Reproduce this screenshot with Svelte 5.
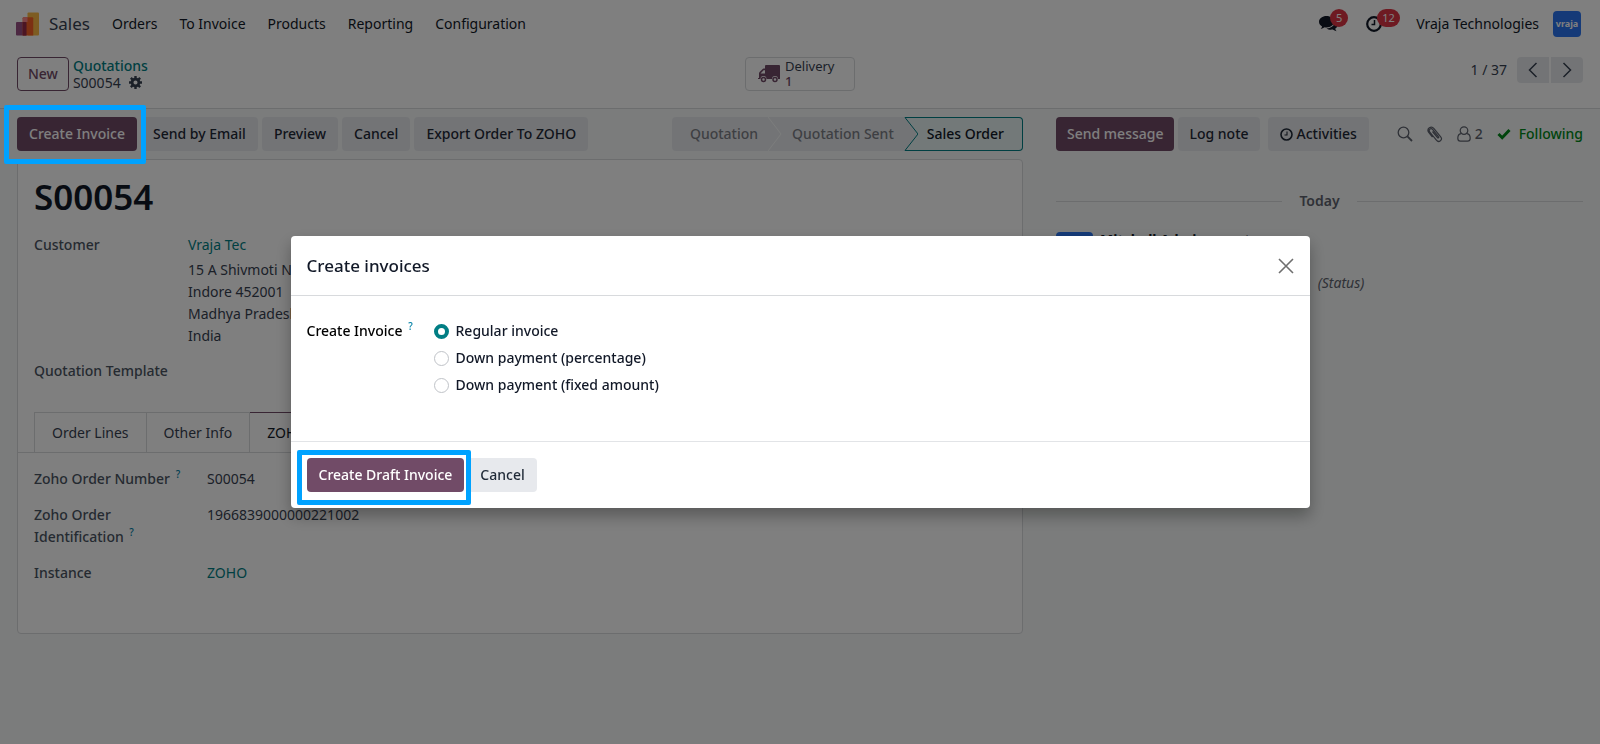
<script>
  // Sales order form with the "Create invoices" wizard open on top of it.
  const menus = ['Orders', 'To Invoice', 'Products', 'Reporting', 'Configuration']
  const actions = ['Send by Email', 'Preview', 'Cancel', 'Export Order To ZOHO']
  const tabs = ['Order Lines', 'Other Info', 'ZOHO']
  const address = ['15 A Shivmoti Nagar', 'Indore 452001', 'Madhya Pradesh MP', 'India']
  const methods = [
    { id: 'delivered', label: 'Regular invoice' },
    { id: 'percentage', label: 'Down payment (percentage)' },
    { id: 'fixed', label: 'Down payment (fixed amount)' },
  ]

  let tab = $state('ZOHO')
  let method = $state('delivered')
  let open = $state(true)
</script>

<div class="app">
  <header>
    <nav class="navbar">
      <svg class="logo" viewBox="0 0 24 24" aria-hidden="true">
        <rect x="0" y="10" width="11" height="14" rx="1" fill="#985184" />
        <rect x="12" y="0" width="12" height="24" rx="1" fill="#fbb945" />
        <path d="M8 5h9a1 1 0 0 1 1 1v18H7V6a1 1 0 0 1 1-1z" fill="#f86126" />
        <path d="M7 10V6a1 1 0 0 1 1-1h4v5z" fill="#fc868b" />
        <path d="M7 10h3a1 1 0 0 1 1 1v13H7z" fill="#962b48" />
      </svg>
      <a class="brand" href="#sales">Sales</a>
      {#each menus as m (m)}
        <a class="menu" href="#{m}">{m}</a>
      {/each}
      <div class="systray">
        <button class="tray" aria-label="Messages">
          <svg width="19" height="16" viewBox="0 0 19 16">
            <path d="M7.500 0C11.600 0 15 2.500 15 5.700s-3.400 5.700-7.500 5.700c-.6 0-1.200 0-1.800-.2-1.200.9-2.700 1.500-4 1.700.7-.8 1.200-1.500 1.400-2.500C1.200 9.400 0 7.700 0 5.700 0 2.500 3.400 0 7.500 0z" fill="currentColor" />
            <path d="M16 4.500c1.800.9 3 2.400 3 4.100 0 1.700-1.100 3.200-2.800 4.100.2.900.7 1.700 1.400 2.500-1.300-.2-2.700-.8-3.900-1.700-2.500.4-4.800-.1-6.200-1.100C12.500 12.300 16.500 9 16 4.500z" fill="currentColor" />
          </svg>
          <span class="count">5</span>
        </button>
        <button class="tray" aria-label="Activities">
          <svg width="16" height="16" viewBox="0 0 16 16" fill="none" stroke="currentColor">
            <circle cx="8" cy="8" r="6.800" stroke-width="2.200" />
            <path d="M8.500 4v4.600H5.500" stroke-width="1.500" />
          </svg>
          <span class="count">12</span>
        </button>
        <button class="user">Vraja Technologies <span class="avatar">vraja</span></button>
      </div>
    </nav>

    <div class="control">
      <div class="crumbs">
        <button class="btn outline">New</button>
        <div class="trail">
          <a href="#quotations">Quotations</a>
          <span class="current">
            S00054
            <button class="gear" aria-label="Actions">
              <svg width="13" height="13" viewBox="0 0 14 14">
                <circle cx="7" cy="7" r="3.700" fill="none" stroke="currentColor" stroke-width="3" />
                <path d="M7 0v3M7 11v3M0 7h3M11 7h3M2 2l2.300 2.300M9.700 9.700L12 12M12 2L9.700 4.300M4.300 9.700L2 12" stroke="currentColor" stroke-width="2.600" />
              </svg>
            </button>
          </span>
        </div>
      </div>
      <button class="stat">
        <svg width="22" height="18" viewBox="0 0 22 18">
          <path d="M8 0h13a1 1 0 0 1 1 1v13h-2a3 3 0 0 0-6 0H8.500a3 3 0 0 0-6 0H0v-1h1V8.500c0-.6.200-1 .6-1.400l2.800-2.800C4.800 4 5.200 3.500 6 3.500h1V1a1 1 0 0 1 1-1zM2.500 8.500H7V5.200H5.600z" fill="currentColor" fill-rule="evenodd" />
          <circle cx="5.500" cy="14.500" r="2" fill="none" stroke="currentColor" stroke-width="1.500" />
          <circle cx="17" cy="14.500" r="2" fill="none" stroke="currentColor" stroke-width="1.500" />
        </svg>
        <span class="stat-text">Delivery<b>1</b></span>
      </button>
      <div class="pager">
        <span>1 / 37</span>
        <button class="page prev" aria-label="Previous">
          <svg width="10" height="16" viewBox="0 0 10 16"><path d="M8.500 1L1.500 8l7 7" /></svg>
        </button>
        <button class="page next" aria-label="Next">
          <svg width="10" height="16" viewBox="0 0 10 16"><path d="M1.500 1l7 7-7 7" /></svg>
        </button>
      </div>
    </div>
  </header>

  <main>
    <section class="form">
      <div class="statusbar">
        <div class="actions">
          <div class="spot">
            <button class="btn primary" onclick={() => (open = true)}>Create Invoice</button>
            <span class="ring ring-page"></span>
          </div>
          {#each actions as a (a)}
            <button class="btn">{a}</button>
          {/each}
        </div>
        <div class="stages">
          <button class="stage first">Quotation</button>
          <svg class="arrow" viewBox="0 0 14 34"><path d="M0 0l13 17L0 34" stroke="#f8faf9" /></svg>
          <button class="stage">Quotation Sent</button>
          <svg class="arrow on" viewBox="0 0 14 34">
            <path class="fill" d="M0 0l13 17L0 34h14V0z" />
            <path d="M14 .5H1l13 16.500L1 33.500h13" stroke="#017e84" />
          </svg>
          <button class="stage current-stage">Sales Order</button>
        </div>
      </div>

      <div class="sheet">
        <h1>S00054</h1>
        <dl class="group partner">
          <dt>Customer</dt>
          <dd>
            <a href="#customer">Vraja Tec</a>
            {#each address as line (line)}
              <span class="line">{line}</span>
            {/each}
          </dd>
          <dt>Quotation Template</dt>
          <dd></dd>
        </dl>
        <div class="tabs">
          {#each tabs as t (t)}
            <button class="tab" class:active={tab === t} onclick={() => (tab = t)}>{t}</button>
          {/each}
        </div>
        <dl class="group zoho">
          <dt>Zoho Order Number <sup>?</sup></dt>
          <dd>S00054</dd>
          <dt>Zoho Order Identification <sup>?</sup></dt>
          <dd>1966839000000221002</dd>
          <dt>Instance</dt>
          <dd><a href="#zoho">ZOHO</a></dd>
        </dl>
      </div>
    </section>

    <aside class="chatter">
      <div class="topbar">
        <button class="btn primary">Send message</button>
        <button class="btn">Log note</button>
        <button class="btn activity">
          <svg width="13" height="13" viewBox="0 0 13 13" fill="none" stroke="currentColor">
            <circle cx="6.500" cy="6.500" r="5.500" stroke-width="1.600" />
            <path d="M7 3.500v3.500H4.500" stroke-width="1.100" />
          </svg>
          Activities
        </button>
        <div class="tools">
          <button class="tool" aria-label="Search">
            <svg width="16" height="16" viewBox="0 0 16 16" fill="none" stroke="currentColor">
              <circle cx="6.500" cy="6.500" r="5.300" stroke-width="1.300" />
              <path d="M10.400 10.400l4.600 4.600" stroke-width="1.800" />
            </svg>
          </button>
          <button class="tool" aria-label="Attach files">
            <svg width="16" height="18" viewBox="0 0 16 18" fill="none" stroke="currentColor" stroke-width="1.200">
              <path d="M5.500 6.500l5 6.200c.6.700 1.700-.2 1.100-.9L5.800 4.600C4 2.400 1 4.700 2.800 7l6.600 8.200c2.500 3 6.700-.3 4.300-3.400L7 3.600C4.200.2-.8 3.700 1.700 7.500l3.800 4.700" />
            </svg>
          </button>
          <button class="tool followers">
            <svg width="14" height="16" viewBox="0 0 14 16" fill="none" stroke="currentColor" stroke-width="1.200">
              <circle cx="7" cy="4.600" r="3.800" />
              <path d="M4 7.600C2 7.900.8 9.500.8 12.300c0 1.700 1 2.900 2.600 2.900h7.200c1.600 0 2.600-1.200 2.600-2.900 0-2.800-1.200-4.400-3.200-4.700" />
            </svg>
            2
          </button>
          <button class="tool following">
            <svg width="14" height="12" viewBox="0 0 14 12"><path d="M1.500 6l3.700 3.700L12.500 2" fill="none" stroke="currentColor" stroke-width="3" /></svg>
            Following
          </button>
        </div>
      </div>
      <div class="day">Today</div>
      <article class="message">
        <span class="photo"></span>
        <div class="body">
          <p class="author"><b>Mitchell Admin</b> <small>- 2 minutes ago</small></p>
          <p class="change">Quotation Sent → Sales Order <i>(Status)</i></p>
        </div>
      </article>
    </aside>
  </main>

  {#if open}
    <div class="backdrop">
      <div class="modal" role="dialog" aria-labelledby="wizard-title">
        <div class="modal-head">
          <h2 id="wizard-title">Create invoices</h2>
          <button class="close" aria-label="Close" onclick={() => (open = false)}>
            <svg width="16" height="16" viewBox="0 0 16 16"><path d="M1 1l14 14M15 1L1 15" /></svg>
          </button>
        </div>
        <div class="modal-body">
          <span class="label" id="method-label">Create Invoice <sup>?</sup></span>
          <div class="options" role="radiogroup" aria-labelledby="method-label">
            {#each methods as m (m.id)}
              <label><input type="radio" name="method" value={m.id} bind:group={method} />{m.label}</label>
            {/each}
          </div>
        </div>
        <div class="modal-foot">
          <div class="spot">
            <button class="btn primary">Create Draft Invoice</button>
            <span class="ring ring-modal"></span>
          </div>
          <button class="btn" onclick={() => (open = false)}>Cancel</button>
        </div>
      </div>
    </div>
  {/if}
</div>

<style>
  :global(body) {
    background: #f6f9f8;
  }
  .app {
    min-height: 100vh;
    font-family: 'Noto Sans', sans-serif;
    font-size: 14px;
    line-height: 22px;
    color: #374151;
  }
  .app * {
    box-sizing: border-box;
  }
  a {
    color: #017e84;
    text-decoration: none;
  }
  button {
    font: inherit;
    color: inherit;
    background: none;
    border: 0;
    padding: 0;
    cursor: pointer;
    white-space: nowrap;
  }
  svg {
    display: block;
    flex: none;
  }
  h1,
  h2,
  p,
  dl,
  dd {
    margin: 0;
  }
  sup {
    color: #0180a5;
    font-size: 10px;
    line-height: 0;
    margin-left: 2px;
  }

  header {
    background: #fff;
    border-bottom: 1px solid #d8dadd;
  }
  .navbar {
    display: flex;
    align-items: center;
    height: 48px;
    padding: 0 19px 0 16px;
    color: #111827;
  }
  .logo {
    width: 23px;
    height: 24px;
  }
  .brand {
    font-size: 17px;
    color: #374151;
    margin: 0 11px 0 10px;
  }
  .menu {
    color: #111827;
    padding: 0 11px;
  }
  .systray {
    display: flex;
    align-items: center;
    margin-left: auto;
  }
  .tray {
    position: relative;
    margin-right: 28px;
  }
  .count {
    position: absolute;
    left: 11px;
    top: -7px;
    min-width: 18px;
    padding: 0 5px;
    border-radius: 9px;
    background: #dc3545;
    color: #fff;
    font-size: 11px;
    line-height: 18px;
  }
  .user {
    display: flex;
    align-items: center;
    gap: 14px;
    margin-left: 6px;
  }
  .avatar {
    width: 28px;
    border-radius: 4px;
    background: #2a75f0;
    color: #fff;
    font-size: 9px;
    font-weight: 700;
    line-height: 26px;
    text-align: center;
  }

  .control {
    display: grid;
    grid-template-columns: 1fr auto 1fr;
    align-items: start;
    padding: 9px 17px 17px;
  }
  .crumbs {
    display: flex;
    gap: 4px;
  }
  .trail {
    display: flex;
    flex-direction: column;
    line-height: 17px;
  }
  .trail a {
    font-weight: 500;
  }
  .current {
    display: flex;
    align-items: center;
    gap: 8px;
  }
  .gear {
    color: #374151;
  }
  .btn {
    height: 34px;
    padding: 0 11px;
    border-radius: 4px;
    background: #e7e9ed;
    color: #1f2937;
    font-weight: 500;
  }
  .primary {
    background: #714b67;
    color: #fff;
  }
  .outline {
    padding: 0 10px;
    background: #fff;
    border: 1px solid #714b67;
    color: #714b67;
  }
  .stat {
    display: flex;
    align-items: center;
    gap: 5px;
    width: 110px;
    height: 34px;
    padding-left: 12px;
    border: 1px solid #d8dadd;
    border-radius: 4px;
    color: #714b67;
  }
  .stat-text {
    display: flex;
    flex-direction: column;
    font-size: 13px;
    line-height: 15px;
    text-align: left;
    color: #374151;
  }
  .stat-text b {
    font-weight: 500;
    color: #714b67;
  }
  .pager {
    display: flex;
    align-items: center;
    justify-content: flex-end;
    gap: 2px;
  }
  .pager span {
    margin-right: 8px;
  }
  .page {
    display: grid;
    place-items: center;
    width: 32px;
    height: 26px;
    background: #e7e9ed;
  }
  .page path {
    fill: none;
    stroke: #374151;
    stroke-width: 1.5;
  }
  .prev {
    border-radius: 4px 0 0 4px;
  }
  .next {
    border-radius: 0 4px 4px 0;
  }

  main {
    display: grid;
    grid-template-columns: 65fr 35fr;
  }
  .form {
    padding: 8px 17px;
    min-width: 0;
  }
  .statusbar {
    display: flex;
    justify-content: space-between;
  }
  .actions {
    display: flex;
    gap: 4px;
  }
  .actions .btn,
  .modal-foot .btn {
    padding: 0 12px;
  }
  .spot {
    position: relative;
  }
  .ring {
    position: absolute;
    z-index: 20;
    border: 5px solid #00a2ff;
    border-radius: 2px;
    pointer-events: none;
  }
  .ring-page {
    inset: -12px -9px -13px -13px;
  }
  .ring-modal {
    inset: -8px -7px -13px -10px;
  }
  .stages {
    display: flex;
    height: 34px;
  }
  .stage {
    padding: 0 10px;
    background: #e7e9ed;
    color: #7c7f86;
    font-weight: 500;
  }
  .first {
    padding-left: 18px;
    border-radius: 4px 0 0 4px;
  }
  .current-stage {
    padding: 0 18px 0 9px;
    background: #e6f2f3;
    border: 1px solid #017e84;
    border-left: 0;
    border-radius: 0 4px 4px 0;
    color: #111827;
  }
  .arrow {
    width: 14px;
    height: 34px;
    background: #e7e9ed;
  }
  .arrow path {
    fill: none;
  }
  .arrow .fill {
    fill: #e6f2f3;
  }

  .sheet {
    margin-top: 8px;
    padding: 16px 16px 49px;
    border: 1px solid #d8dadd;
    border-radius: 4px;
    background: #fff;
  }
  h1 {
    font-size: 35px;
    font-weight: 600;
    line-height: 42px;
    color: #111827;
  }
  .group {
    display: grid;
    align-items: start;
  }
  dt {
    font-weight: 500;
    color: #4b5563;
  }
  .partner {
    grid-template-columns: 154px 1fr;
    row-gap: 13px;
    margin-top: 16px;
  }
  .partner a {
    display: block;
    margin-bottom: 3px;
  }
  .line {
    display: block;
  }
  .tabs {
    display: flex;
    margin: 30px -16px 0;
    padding-left: 16px;
    border-bottom: 1px solid #d8dadd;
  }
  .tab {
    height: 40px;
    padding: 0 17px;
    border: 1px solid #d8dadd;
    border-width: 1px 1px 0 0;
  }
  .tab:first-child {
    border-left-width: 1px;
  }
  .tab.active {
    margin-bottom: -1px;
    border-top-color: #714b67;
    background: #fff;
    color: #111827;
  }
  .zoho {
    grid-template-columns: 157px 1fr;
    column-gap: 16px;
    row-gap: 14px;
    margin-top: 15px;
  }

  .chatter {
    padding: 8px 17px 8px 16px;
    min-width: 0;
  }
  .topbar {
    display: flex;
    align-items: center;
    gap: 4px;
  }
  .activity {
    display: flex;
    align-items: center;
    gap: 4px;
    margin-left: 4px;
    padding: 0 12px;
  }
  .tools {
    display: flex;
    align-items: center;
    gap: 14px;
    margin-left: auto;
    color: #5f636f;
  }
  .tool {
    display: flex;
    align-items: center;
    gap: 4px;
    font-weight: 500;
  }
  .following {
    gap: 8px;
    color: #008818;
  }
  .day {
    display: flex;
    align-items: center;
    gap: 17px;
    margin: 39px 0 20px;
    font-weight: 600;
    color: #5f636f;
  }
  .day::before,
  .day::after {
    content: '';
    flex: 1;
    height: 1px;
    background: #d8dadd;
  }
  .message {
    display: flex;
    gap: 7px;
  }
  .photo {
    width: 37px;
    height: 37px;
    border-radius: 4px;
    background: #2a75f0;
  }
  .author {
    line-height: 16px;
  }
  .author b {
    color: #111827;
  }
  .author small {
    margin-left: 8px;
    font-size: 12px;
    color: #5f636f;
  }
  .change {
    margin-top: 23px;
    padding-left: 8px;
  }
  .change i {
    margin-left: 9px;
    color: #5f636f;
  }

  .backdrop {
    position: fixed;
    inset: 0;
    z-index: 10;
    display: grid;
    place-items: center;
    background: rgba(0, 0, 0, 0.5);
  }
  .modal {
    width: calc(100% - 32px);
    max-width: 1019px;
    border-radius: 4px;
    background: #fff;
    box-shadow: 0 8px 16px rgba(0, 0, 0, 0.3);
  }
  .modal-head {
    display: flex;
    align-items: center;
    justify-content: space-between;
    height: 60px;
    padding: 0 16px;
    border-bottom: 1px solid #d8dadd;
  }
  h2 {
    font-size: 17px;
    font-weight: 500;
    color: #111827;
  }
  .close path {
    stroke: #6f6f6f;
    stroke-width: 1.6;
  }
  .modal-body {
    display: flex;
    padding: 24px 16px 45px;
    color: #111827;
    font-weight: 500;
  }
  .label {
    width: 127px;
    color: #000;
  }
  .options {
    display: grid;
    gap: 5px;
  }
  .options label {
    display: flex;
    align-items: center;
    gap: 7px;
  }
  .options input {
    appearance: none;
    width: 15px;
    height: 15px;
    margin: 0;
    border: 1px solid #c0c3c8;
    border-radius: 50%;
    background: #fff;
  }
  .options input:checked {
    border: 4px solid #017e84;
  }
  .modal-foot {
    display: flex;
    gap: 4px;
    padding: 16px;
    border-top: 1px solid #e2e4e7;
  }
</style>
